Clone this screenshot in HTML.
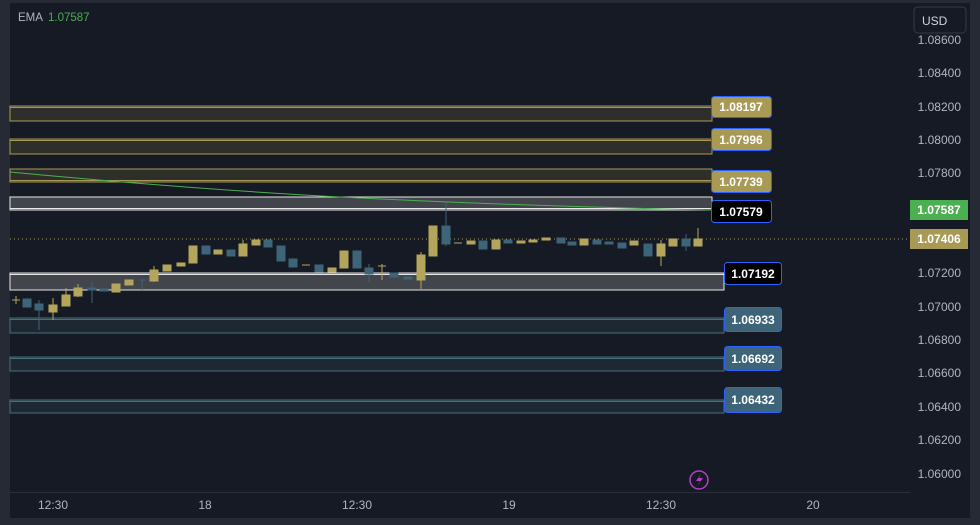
<!DOCTYPE html>
<html><head><meta charset="utf-8"><style>
html,body{margin:0;padding:0;background:#2a2e39;width:980px;height:525px;overflow:hidden}
svg{display:block}
text{font-family:"Liberation Sans",sans-serif}
</style></head><body>
<svg width="980" height="525" viewBox="0 0 980 525">
<rect x="0" y="0" width="980" height="525" fill="#262a35"/>
<rect x="10" y="3" width="960" height="515" fill="#161a25"/>
<text x="18" y="21" font-size="11.5" fill="#b2b5be">EMA</text>
<text x="48" y="21" font-size="11.5" fill="#4caf50">1.07587</text>
<rect x="914" y="7" width="52" height="26" rx="4" fill="#161a25" stroke="#363a45"/>
<text x="922" y="25" font-size="12" fill="#d1d4dc">USD</text>
<g font-size="12" fill="#b2b5be" text-anchor="end">
<text x="961" y="44">1.08600</text><text x="961" y="77">1.08400</text><text x="961" y="111">1.08200</text>
<text x="961" y="144">1.08000</text><text x="961" y="177">1.07800</text><text x="961" y="277">1.07200</text>
<text x="961" y="311">1.07000</text><text x="961" y="344">1.06800</text><text x="961" y="377">1.06600</text>
<text x="961" y="411">1.06400</text><text x="961" y="444">1.06200</text><text x="961" y="478">1.06000</text>
</g>
<!-- bands -->
<rect x="10" y="106" width="702" height="15" fill="#2e2f2b" stroke="#a89a55"/><line x1="10" y1="107.5" x2="712" y2="107.5" stroke="#a89a55"/>
<rect x="10" y="139" width="702" height="15" fill="#2e2f2b" stroke="#a89a55"/><line x1="10" y1="140.5" x2="712" y2="140.5" stroke="#a89a55"/>
<rect x="10" y="169" width="702" height="13" fill="#2e2f2b" stroke="#a89a55"/><line x1="10" y1="180.5" x2="712" y2="180.5" stroke="#a89a55"/>
<rect x="10" y="197" width="702" height="13" fill="#43454d" stroke="#e8e8e8"/><line x1="10" y1="208.5" x2="712" y2="208.5" stroke="#e8e8e8"/>
<rect x="10" y="273" width="714" height="17" fill="#43454d" stroke="#e8e8e8"/><line x1="10" y1="274.5" x2="724" y2="274.5" stroke="#e8e8e8"/>
<rect x="10" y="318" width="714" height="15" fill="#1e2833" stroke="#46707e"/><line x1="10" y1="319.5" x2="724" y2="319.5" stroke="#46707e"/>
<rect x="10" y="357" width="714" height="14" fill="#1e2833" stroke="#46707e"/><line x1="10" y1="358.5" x2="724" y2="358.5" stroke="#46707e"/>
<rect x="10" y="400" width="714" height="13" fill="#1e2833" stroke="#46707e"/><line x1="10" y1="401.5" x2="724" y2="401.5" stroke="#46707e"/>
<path d="M10 172 Q200 190 360 198 T712 210" fill="none" stroke="#4caf50" stroke-width="1"/>
<line x1="10" y1="239" x2="910" y2="239" stroke="#a89a55" stroke-dasharray="1 3"/>
<!-- candles -->
<g stroke-width="1">
<g fill="#b4a55c" stroke="#b4a55c">
<line x1="16" y1="296" x2="16" y2="304"/><line x1="12" y1="300" x2="20" y2="300"/>
<rect x="49" y="305" width="8" height="7"/><line x1="53" y1="298" x2="53" y2="320"/>
<rect x="62" y="295" width="8" height="11"/><line x1="66" y1="288" x2="66" y2="306"/>
<rect x="74" y="288" width="8" height="8"/><line x1="78" y1="284" x2="78" y2="297"/>
<rect x="112" y="284" width="8" height="8"/><rect x="125" y="280" width="8" height="5"/>
<rect x="150" y="270" width="8" height="11"/><line x1="154" y1="266" x2="154" y2="282"/>
<rect x="163" y="265" width="8" height="6"/><rect x="177" y="263" width="8" height="3"/>
<rect x="189" y="246" width="8" height="17"/><rect x="214" y="250" width="8" height="4"/>
<rect x="239" y="244" width="8" height="12"/><line x1="243" y1="240" x2="243" y2="256"/>
<rect x="252" y="240" width="8" height="5"/>
<line x1="302" y1="265" x2="310" y2="265"/><rect x="328" y="268" width="8" height="4"/>
<rect x="340" y="251" width="8" height="17"/><line x1="378" y1="266" x2="386" y2="266"/><line x1="382" y1="264" x2="382" y2="280"/>
<rect x="417" y="255" width="8" height="25"/><line x1="421" y1="252" x2="421" y2="289"/>
<rect x="429" y="226" width="8" height="30"/>
<line x1="454" y1="243" x2="462" y2="243"/><rect x="467" y="241" width="8" height="3"/>
<rect x="492" y="240" width="8" height="9"/><rect x="517" y="241" width="8" height="2"/>
<rect x="529" y="240" width="8" height="2"/><rect x="542" y="238" width="8" height="2"/>
<rect x="580" y="239" width="8" height="6"/><rect x="630" y="241" width="8" height="4"/>
<rect x="657" y="244" width="8" height="12"/><line x1="661" y1="240" x2="661" y2="266"/>
<rect x="669" y="239" width="8" height="7"/><rect x="694" y="239" width="8" height="7"/><line x1="698" y1="228" x2="698" y2="246"/>
</g>
<g fill="#3d6478" stroke="#3d6478">
<rect x="23" y="299" width="8" height="8"/><rect x="35" y="304" width="8" height="6"/><line x1="39" y1="300" x2="39" y2="330"/>
<rect x="88" y="288" width="8" height="2"/><line x1="92" y1="282" x2="92" y2="303"/>
<rect x="100" y="289" width="8" height="2"/><line x1="142" y1="280" x2="142" y2="290"/><line x1="139" y1="280" x2="145" y2="280"/>
<rect x="202" y="246" width="8" height="8"/><rect x="227" y="250" width="8" height="6"/>
<rect x="264" y="240" width="8" height="7"/><rect x="277" y="246" width="8" height="15"/>
<rect x="289" y="259" width="8" height="8"/><rect x="315" y="265" width="8" height="7"/>
<rect x="353" y="251" width="8" height="17"/><rect x="365" y="268" width="8" height="6"/><line x1="369" y1="264" x2="369" y2="282"/>
<rect x="390" y="273" width="8" height="4"/><rect x="404" y="277" width="8" height="2"/>
<rect x="442" y="226" width="8" height="18"/><line x1="446" y1="203" x2="446" y2="246"/>
<rect x="479" y="241" width="8" height="8"/><rect x="504" y="240" width="8" height="3"/>
<rect x="557" y="238" width="8" height="5"/><rect x="568" y="242" width="8" height="3"/>
<rect x="593" y="240" width="8" height="4"/><rect x="605" y="242" width="8" height="2"/>
<rect x="618" y="243" width="8" height="5"/><rect x="644" y="244" width="8" height="12"/>
<rect x="682" y="239" width="8" height="7"/><line x1="686" y1="234" x2="686" y2="251"/>
</g>
</g>
<!-- labels -->
<g font-size="12" font-weight="bold" text-anchor="middle">
<rect x="711.5" y="96.5" width="60" height="21" rx="3" fill="#a89a55" stroke="#2962ff"/><text x="741" y="111" fill="#fff">1.08197</text>
<rect x="711.5" y="128.5" width="60" height="22" rx="3" fill="#a89a55" stroke="#2962ff"/><text x="741" y="144" fill="#fff">1.07996</text>
<rect x="711.5" y="170.5" width="60" height="22" rx="3" fill="#a89a55" stroke="#2962ff"/><text x="741" y="186" fill="#fff">1.07739</text>
<rect x="711.5" y="200.5" width="60" height="22" rx="3" fill="#000" stroke="#2962ff"/><text x="741" y="216" fill="#fff">1.07579</text>
<rect x="724.5" y="262.5" width="57" height="22" rx="3" fill="#000" stroke="#2962ff"/><text x="753" y="278" fill="#fff">1.07192</text>
<rect x="724.5" y="307.5" width="57" height="24" rx="3" fill="#3d6478" stroke="#2962ff"/><text x="753" y="324" fill="#fff">1.06933</text>
<rect x="724.5" y="346.5" width="57" height="24" rx="3" fill="#3d6478" stroke="#2962ff"/><text x="753" y="363" fill="#fff">1.06692</text>
<rect x="724.5" y="387.5" width="57" height="25" rx="3" fill="#3d6478" stroke="#2962ff"/><text x="753" y="404" fill="#fff">1.06432</text>
<rect x="910" y="200" width="58" height="20" fill="#4caf50"/><text x="939" y="214" fill="#fff">1.07587</text>
<rect x="910" y="229" width="58" height="20" fill="#a89a55"/><text x="939" y="243" fill="#fff">1.07406</text>
</g>
<line x1="10" y1="492.5" x2="910" y2="492.5" stroke="#2a2e39"/>
<circle cx="699" cy="480" r="9" fill="none" stroke="#b53fc5" stroke-width="1.5"/>
<path d="M701 474 L696 481 L700 481 L697 486 L703 478 L699 478 Z" fill="#b53fc5"/>
<g font-size="12" fill="#b2b5be" text-anchor="middle">
<text x="53" y="509">12:30</text><text x="205" y="509">18</text><text x="357" y="509">12:30</text>
<text x="509" y="509">19</text><text x="661" y="509">12:30</text><text x="813" y="509">20</text>
</g>
</svg>
</body></html>
